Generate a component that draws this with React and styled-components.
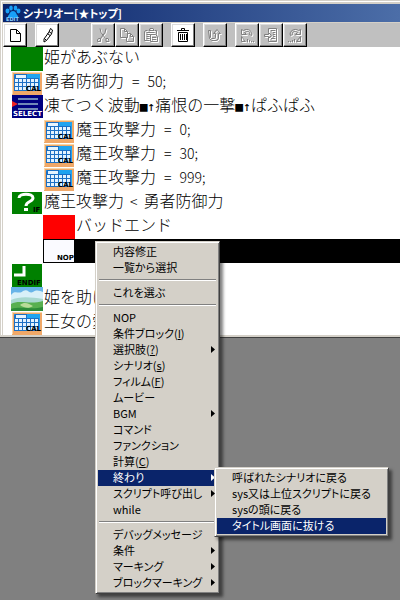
import React from "react";
import styled, { createGlobalStyle, css } from "styled-components";

const Global = createGlobalStyle`
  * { box-sizing: border-box; }
  body { margin: 0; background: #808080; }
  button { font: inherit; color: inherit; }
`;

const Desktop = styled.main`
  position: relative;
  min-height: 100vh;
  overflow: hidden;
  background: #808080;
  font-family: "Noto Sans CJK JP", sans-serif;
  color: #000;
`;

const Window = styled.section`
  border-bottom: 1px solid #404040;
  padding: 1px 0 2px 1px;
  background: #d4d0c8;
`;

const Frame = styled.div`
  border-top: 1px solid #fff;
  border-left: 1px solid #fff;
  padding: 2px 0 0 1px;
`;

const TitleBar = styled.header`
  display: flex;
  align-items: center;
  gap: 2px;
  height: 18px;
  margin-bottom: 1px;
  padding-left: 2px;
  background: linear-gradient(to right, #0a246a, #4c6ea8);
  color: #fff;
`;

const Title = styled.h1`
  margin: 0;
  font-size: 11px;
  line-height: 18px;
  font-weight: 700;
  font-feature-settings: "palt";
  white-space: nowrap;
`;

const Toolbar = styled.div`
  display: flex;
  gap: 8px;
  height: 24px;
  background: #c0c0c0;
`;

const ToolGroup = styled.div`
  display: flex;
  margin-left: ${(p) => (p.$spaced ? "24px" : "0")};
`;

const ToolButton = styled.button`
  display: grid;
  place-items: center;
  width: 24px;
  height: 24px;
  padding: 0;
  border: 1px solid;
  border-color: #fff #000 #000 #fff;
  box-shadow: inset -1px -1px #808080, inset 1px 1px #dcdcdc;
  background: ${(p) => (p.disabled ? "#c0c0c0" : "#fff")};
`;

const List = styled.ul`
  margin: 0;
  padding: 0 0 0 8px;
  list-style: none;
  background: #fff;
`;

const Row = styled.li`
  display: flex;
  height: 24px;
  padding-left: ${(p) => (p.$indent ? "32px" : "0")};
`;

const RowText = styled.span`
  flex: 1;
  padding-left: 1px;
  font-size: 16px;
  font-weight: 300;
  line-height: 19px;
  white-space: pre;
  ${(p) => p.$selected && css`background: #000; color: #fff;`}
`;

const Code = styled.span`
  font-size: 14px;
`;

const Operator = styled(Code)`
  margin: 0 ${(p) => (p.$tight ? "6px" : "8px")};
`;

const Mark = styled.span`
  font-family: "DejaVu Sans Mono", monospace;
  font-size: 13px;
`;

const MenuBox = styled.div`
  position: absolute;
  padding: 2px;
  border: 1px solid;
  border-color: #d4d0c8 #404040 #404040 #d4d0c8;
  background: #d4d0c8;
  box-shadow: inset 1px 1px #fff, inset -1px -1px #808080, 3px 3px 3px rgba(0, 0, 0, 0.5);
  font-size: 11px;
  font-feature-settings: "palt";
`;

const ContextMenu = styled(MenuBox)`
  left: 95px;
  top: 241px;
  width: 125px;
`;

const SubMenu = styled(MenuBox)`
  left: 116px;
  top: -3px;
  width: 175px;
`;

const ItemWrap = styled.div`
  position: relative;
`;

const MenuItem = styled.button`
  display: flex;
  align-items: center;
  justify-content: space-between;
  width: 100%;
  height: 16px;
  padding: 0 2px 1px 15px;
  border: 0;
  text-align: left;
  line-height: 15px;
  white-space: nowrap;
  background: ${(p) => (p.$active ? "#0a246a" : "transparent")};
  color: ${(p) => (p.$active ? "#fff" : "#000")};
`;

const Separator = styled.hr`
  height: 2px;
  margin: 3px 1px 4px;
  border: 0;
  border-top: 1px solid #808080;
  border-bottom: 1px solid #fff;
`;

const Icon = styled.svg`
  display: block;
  flex: none;
`;

const Caption = styled.text`
  font-family: "DejaVu Sans", sans-serif;
  font-size: ${(p) => (p.$small ? "5px" : "7px")};
  font-weight: 700;
`;

function PawIcon() {
  return (
    <Icon width="16" height="17" viewBox="0 0 16 17">
      <g fill="#18a0f8">
        <ellipse cx="2.500" cy="6" rx="2" ry="2.400" />
        <ellipse cx="6" cy="3" rx="1.800" ry="2.500" />
        <ellipse cx="10.500" cy="3" rx="1.800" ry="2.500" />
        <ellipse cx="13.500" cy="6" rx="2" ry="2.400" />
        <path d="M8 6c3 0 3 3 5 5v2H3v-2c2-2 2-5 5-5z" />
      </g>
      <Caption $small x="1" y="16" fill="#8cd0ff">EDIT</Caption>
    </Icon>
  );
}

function CalcIcon() {
  const cells = [];
  for (let r = 0; r < 3; r++)
    for (let c = 0; c < 6; c++)
      cells.push(<rect key={r + "-" + c} x={4 + c * 4} y={8 + r * 4} width="3" height="3" />);
  return (
    <Icon width="32" height="24" viewBox="0 0 32 24">
      <path fill="#f0a868" d="M1 1h30v23H1z" />
      <path fill="#f8d8a8" d="M1 1h30v1H2v21H1z" />
      <path fill="#20a4f0" d="M3 3h26v17H3z" />
      <path fill="#1c70c4" d="M4 3h12v4h12v13H3V5z" />
      <g fill="#e4f4ff">
        <path d="M5 4h10v3H5z" />
        {cells}
      </g>
      <Caption x="15" y="20">CAL</Caption>
    </Icon>
  );
}

function SelectIcon() {
  return (
    <Icon width="32" height="24" viewBox="0 0 32 24">
      <path fill="#000080" d="M1 0h31v23H1z" />
      <path stroke="#7088b8" strokeWidth="2" d="M7 4h20M7 9h20M7 14h20" />
      <path fill="#f02020" d="M1 6l6 3-6 3z" />
      <Caption x="2" y="21" fill="#fff">SELECT</Caption>
    </Icon>
  );
}

function IfIcon() {
  return (
    <Icon width="32" height="24" viewBox="0 0 32 24">
      <path fill="#008000" d="M1 1h30v22H1z" />
      <path fill="none" stroke="#fff" strokeWidth="3" d="M8 7c0-5 14-5 14 0 0 4-7 3-7 8" />
      <path fill="#fff" d="M13 17h4v3h-4z" />
      <Caption x="22" y="21">IF</Caption>
    </Icon>
  );
}

function EndIfIcon() {
  return (
    <Icon width="32" height="24" viewBox="0 0 32 24">
      <path fill="#008000" d="M1 1h30v23H1z" />
      <path fill="none" stroke="#fff" strokeWidth="3" d="M13 3v9H3" />
      <Caption x="6" y="22">ENDIF</Caption>
    </Icon>
  );
}

function NopIcon() {
  return (
    <Icon width="32" height="24" viewBox="0 0 32 24">
      <path fill="#000" d="M0 0h32v24H0z" />
      <path fill="#fafaff" d="M1 1h30v22H1z" />
      <Caption x="14" y="21">NOP</Caption>
    </Icon>
  );
}

function ColorIcon({ color }) {
  return (
    <Icon width="32" height="24" viewBox="0 0 32 24">
      <path fill={color} d="M0 0h32v24H0z" />
    </Icon>
  );
}

function SceneIcon() {
  return (
    <Icon width="32" height="24" viewBox="0 0 32 24">
      <path fill="#68b4e8" d="M0 0h32v24H0z" />
      <path fill="#d8f0f8" d="M0 8c4-6 8 0 12-4 5-3 6 3 10 1 4-3 7-1 10 0v9H0z" />
      <path fill="#a8d8d0" d="M0 13c8-4 20-3 32-1v5H0z" />
      <path fill="#58b050" d="M0 17c8-5 18 1 32-3v10H0z" />
      <path fill="#b8dc98" d="M9 18c5-4 9-1 13 1-4 3-9 2-13-1z" />
      <path fill="#2c8c38" d="M0 22c10-3 20 1 32-2v4H0z" />
    </Icon>
  );
}

const toolShapes = {
  new: <path d="M3.500 2.500h6l4 4v8h-10zM9.500 2.500v4h4" />,
  edit: <path d="M11.500 1.500l2 1.500-1 4-5 6.500-2.500 1.500 0-3 5-7zM10 4.500l2.500 2M5.500 11.500l2 2M8.500 6.500l2.500 2" />,
  cut: <path d="M5 1.500l1 4 4.500 6M11 1.500l-1 4-4.500 6M3.500 11.500h2v3h-3v-2zM11 11.500h2l1 2v1h-3z" />,
  copy: <path d="M1.500 1.500h4l3 3v6h-7zM5.500 1.500v3h3M8.500 6.500h3l3 3v5h-7v-4M11.500 6.500v3h3" />,
  paste: (
    <path d="M4.500 3.500h-2l-1 1v9h5M6 3.500l1-2h3l1 2zM11.500 3.500h2v4M3.500 5.500h8M3.500 7.500h4M3.500 9.500h3M3.500 11.500h3M7.500 7.500h5l2 2v5h-7zM9 10.500h4M9 12.500h4" />
  ),
  trash: <path d="M2 3.500h12M6.500 3v-1.500h3V3M3.500 5.500h9v9h-9zM5.500 7v6M7.500 7v6M9.500 7v6M11.500 7v6" />,
  undo: <path d="M1.500 3.500h2v7l1 1h3l1-1v-4h-2l3.500-4 3.500 4h-2v5l-2 2h-5l-2-2z" />,
  back: <path d="M2.500 2.500v5h5l-2-2c3-2 6-1 5 2l2 1c2-4-4-8-8-5zM2.500 9.500v5h4zM8.500 12v3M10.500 13v2M12.500 14v1M14.500 14v1" />,
  enter: <path d="M5.500 5v-3.500h8v13h-8V11M1.500 7.500h4v-2l3 3-3 3v-2h-4zM8 3.500h4M10 5.500h2M10 7.500h2M10 9.500h2M8 11.500h4" />,
  forward: <path d="M13.500 2.500v5h-5l2-2c-3-2-6-1-5 2l-2 1c-2-4 4-8 8-5zM13.500 9.500v5h-4zM7.500 12v3M5.500 13v2M3.500 14v1M1.500 14v1" />,
};

function Tool({ name, label, disabled }) {
  const shape = toolShapes[name];
  return (
    <ToolButton type="button" aria-label={label} disabled={disabled}>
      <Icon width="17" height="17" viewBox="0 0 17 17" fill="none">
        {disabled && <g stroke="#fff" transform="translate(1 1)">{shape}</g>}
        <g stroke={disabled ? "#808080" : "#000"}>{shape}</g>
      </Icon>
    </ToolButton>
  );
}

function Assign({ name, value }) {
  return (
    <>
      {name}
      <Operator>=</Operator>
      <Code>{value};</Code>
    </>
  );
}

const rows = [
  { icon: <ColorIcon color="#008000" />, text: "姫があぶない" },
  { icon: <CalcIcon />, text: <Assign name="勇者防御力" value="50" /> },
  {
    icon: <SelectIcon />,
    text: (
      <>
        凍てつく波動<Mark>■↑</Mark>痛恨の一撃<Mark>■↑</Mark>ぱふぱふ
      </>
    ),
  },
  { icon: <CalcIcon />, indent: true, text: <Assign name="魔王攻撃力" value="0" /> },
  { icon: <CalcIcon />, indent: true, text: <Assign name="魔王攻撃力" value="30" /> },
  { icon: <CalcIcon />, indent: true, text: <Assign name="魔王攻撃力" value="999" /> },
  { icon: <IfIcon />, text: <>魔王攻撃力<Operator $tight>&lt;</Operator>勇者防御力</> },
  { icon: <ColorIcon color="#ff0000" />, indent: true, text: "バッドエンド" },
  { icon: <NopIcon />, indent: true, text: "", selected: true },
  { icon: <EndIfIcon />, text: "" },
  { icon: <SceneIcon />, text: "姫を助け" },
  { icon: <CalcIcon />, text: "王女の愛" },
];

const endings = ["呼ばれたシナリオに戻る", "sys又は上位スクリプトに戻る", "sysの頭に戻る", "タイトル画面に抜ける"];

const menu = [
  { label: "内容修正" },
  { label: "一覧から選択" },
  null,
  { label: "これを選ぶ" },
  null,
  { label: "NOP" },
  { label: "条件ブロック", hotkey: "I" },
  { label: "選択肢", hotkey: "?", more: true },
  { label: "シナリオ", hotkey: "s" },
  { label: "フィルム", hotkey: "F" },
  { label: "ムービー" },
  { label: "BGM", more: true },
  { label: "コマンド" },
  { label: "ファンクション" },
  { label: "計算", hotkey: "C" },
  { label: "終わり", more: true, children: endings },
  { label: "スクリプト呼び出し", more: true },
  { label: "while" },
  null,
  { label: "デバッグメッセージ" },
  { label: "条件", more: true },
  { label: "マーキング", more: true },
  { label: "ブロックマーキング", more: true },
];

function Entry({ item }) {
  return (
    <ItemWrap>
      <MenuItem type="button" role="menuitem" $active={Boolean(item.children)}>
        <span>
          {item.label}
          {item.hotkey && <>(<u>{item.hotkey}</u>)</>}
        </span>
        {item.more && (
          <Icon width="4" height="7" viewBox="0 0 4 7">
            <path fill="currentColor" d="M0 0l4 3.500L0 7z" />
          </Icon>
        )}
      </MenuItem>
      {item.children && (
        <SubMenu role="menu" aria-label={item.label}>
          {item.children.map((label, i) => (
            <MenuItem key={label} type="button" role="menuitem" $active={i === item.children.length - 1}>
              {label}
            </MenuItem>
          ))}
        </SubMenu>
      )}
    </ItemWrap>
  );
}

export default function App() {
  return (
    <Desktop>
      <Global />
      <Window>
        <Frame>
          <TitleBar>
            <PawIcon />
            <Title>シナリオー[★トップ]</Title>
          </TitleBar>
          <Toolbar>
            <Tool name="new" label="新規" />
            <Tool name="edit" label="編集" />
            <ToolGroup $spaced>
              <Tool name="cut" label="切り取り" disabled />
              <Tool name="copy" label="コピー" disabled />
              <Tool name="paste" label="貼り付け" disabled />
            </ToolGroup>
            <Tool name="trash" label="削除" />
            <Tool name="undo" label="元に戻す" disabled />
            <ToolGroup>
              <Tool name="back" label="前へ" disabled />
              <Tool name="enter" label="入る" disabled />
              <Tool name="forward" label="次へ" disabled />
            </ToolGroup>
          </Toolbar>
          <List>
            {rows.map((row, i) => (
              <Row key={i} $indent={row.indent}>
                {row.icon}
                <RowText $selected={row.selected}>{row.text}</RowText>
              </Row>
            ))}
          </List>
        </Frame>
      </Window>
      <ContextMenu role="menu" aria-label="コマンド">
        {menu.map((item, i) => (item ? <Entry key={i} item={item} /> : <Separator key={i} />))}
      </ContextMenu>
    </Desktop>
  );
}
